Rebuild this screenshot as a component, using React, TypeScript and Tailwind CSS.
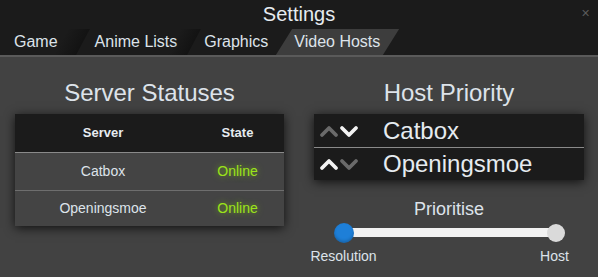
import React from "react";

function Chevron({ dir, color }: { dir: "up" | "down"; color: string }) {
  return (
    <svg width="20" height="14" viewBox="0 0 20 14">
      {dir === "up" ? (
        <path d="M3 11 L10 4 L17 11" fill="none" stroke={color} strokeWidth="3.8" strokeLinecap="round" strokeLinejoin="round" />
      ) : (
        <path d="M3 4 L10 11 L17 4" fill="none" stroke={color} strokeWidth="3.8" strokeLinecap="round" strokeLinejoin="round" />
      )}
    </svg>
  );
}

export default function App() {
  const font = { fontFamily: '"Liberation Sans", Arial, sans-serif' };
  return (
    <div className="w-[598px] h-[277px] bg-[#424242] overflow-hidden text-[#dde3ea]" style={font}>
      {/* Top bar */}
      <div className="relative h-[55px] bg-[#1b1b1b]">
        <div className="pt-[2px] text-center text-[20px] leading-[25px] text-[#e6ebf0]">Settings</div>
        <div className="absolute right-[8px] top-[8px] text-[11px] leading-none text-[#5a5a5a]">✕</div>
        <div className="flex h-[28px] items-end pl-[14px] text-[16px] leading-[26px]">
          <div className="relative pr-[37px]">Game</div>
          <div className="relative pr-[27px]">
            <span className="absolute left-[-34px] top-[0px] h-[26px] w-[22px] -skew-x-[28deg] bg-gradient-to-r from-transparent to-[#0f0f0f] opacity-70" />
            <span className="relative">Anime Lists</span>
          </div>
          <div className="relative pr-[16px]">
            <span className="absolute left-[-30px] top-[0px] h-[26px] w-[20px] -skew-x-[28deg] bg-gradient-to-r from-transparent to-[#0f0f0f] opacity-70" />
            <span className="relative">Graphics</span>
          </div>
          <div className="relative px-[10px]">
            <span className="absolute inset-y-0 left-0 right-[-1px] -skew-x-[32deg] bg-[#3d3d3d]" />
            <span className="relative">Video Hosts</span>
          </div>
        </div>
      </div>
      <div className="h-[2px] bg-[#5a5a5a]" />

      {/* Body */}
      <div className="grid grid-cols-[269px_270px] gap-x-[30px] pl-[15px] pt-[22px]">
        {/* Left */}
        <div className="flex flex-col items-center">
          <div className="text-[24px] leading-[28px] text-[#dde3ea]">Server Statuses</div>
          <div className="mt-[7px] w-full bg-[#424242] shadow-[0_2px_10px_rgba(0,0,0,0.75)]">
            <div className="flex h-[38px] items-center bg-[#1b1b1b] text-[13px] font-bold text-[#e6ebf0]">
              <div className="w-[176px] text-center">Server</div>
              <div className="flex-1 text-center">State</div>
            </div>
            <div className="h-[1px] bg-[#8a8a8a]" />
            <div className="flex h-[37px] items-center bg-[#444444] text-[14px]">
              <div className="w-[176px] text-center">Catbox</div>
              <div className="flex-1 text-center text-[#9be419] [text-shadow:0_0_6px_rgba(150,220,20,0.6)]">Online</div>
            </div>
            <div className="h-[1px] bg-[#6e6e6e]" />
            <div className="flex h-[35px] items-center bg-[#444444] text-[14px]">
              <div className="w-[176px] text-center">Openingsmoe</div>
              <div className="flex-1 text-center text-[#9be419] [text-shadow:0_0_6px_rgba(150,220,20,0.6)]">Online</div>
            </div>
          </div>
        </div>

        {/* Right */}
        <div className="flex flex-col items-center">
          <div className="text-[24px] leading-[28px] text-[#dde3ea]">Host Priority</div>
          <div className="mt-[7px] w-full bg-[#1b1b1b] shadow-[0_2px_10px_rgba(0,0,0,0.75)]">
            <div className="flex h-[33px] items-center">
              <div className="flex w-[69px] items-center pl-[5px]">
                <Chevron dir="up" color="#6a6a6a" />
                <Chevron dir="down" color="#f2f2f2" />
              </div>
              <div className="text-[24px] leading-[28px] text-[#e6ebf0]">Catbox</div>
            </div>
            <div className="h-[1px] bg-[#8a8a8a]" />
            <div className="flex h-[32px] items-center">
              <div className="flex w-[69px] items-center pl-[5px]">
                <Chevron dir="up" color="#f2f2f2" />
                <Chevron dir="down" color="#6a6a6a" />
              </div>
              <div className="text-[24px] leading-[28px] text-[#e6ebf0]">Openingsmoe</div>
            </div>
          </div>

          <div className="mt-[18px] text-[18px] leading-[22px] text-[#dde3ea]">Prioritise</div>
          <div className="relative mt-[3px] h-[20px] w-[232px] translate-x-[1px]">
            <div className="absolute left-[10px] right-[10px] top-[5px] h-[9px] bg-[#f2f2f2]" />
            <div className="absolute left-0 top-0 h-[20px] w-[20px] rounded-full bg-[#1e7fd8] shadow-[inset_0_-2px_3px_rgba(0,0,0,0.2)]" />
            <div className="absolute right-[1px] top-[1px] h-[18px] w-[18px] rounded-full bg-[#dadada]" />
          </div>
          <div className="mt-[5px] flex w-[291px] justify-between text-[14px] leading-[16px] text-[#dde3ea]">
            <span className="w-[80px] text-center">Resolution</span>
            <span className="w-[80px] text-center">Host</span>
          </div>
        </div>
      </div>
    </div>
  );
}
